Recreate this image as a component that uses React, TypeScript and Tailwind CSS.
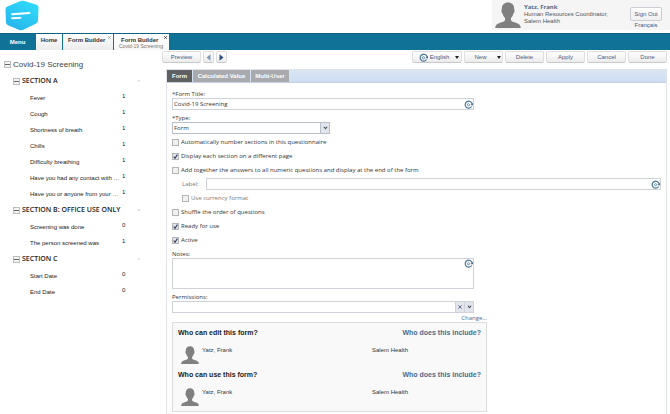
import { useState } from "react";
import type { ReactNode } from "react";

type Question = { label: string; count: number };
type Section = { title: string; questions: Question[] };

const sections: Section[] = [
  {
    title: "SECTION A",
    questions: [
      { label: "Fever", count: 1 },
      { label: "Cough", count: 1 },
      { label: "Shortness of breath", count: 1 },
      { label: "Chills", count: 1 },
      { label: "Difficulty breathing", count: 1 },
      { label: "Have you had any contact with …", count: 1 },
      { label: "Have you or anyone from your …", count: 1 },
    ],
  },
  {
    title: "SECTION B: OFFICE USE ONLY",
    questions: [
      { label: "Screening was done", count: 0 },
      { label: "The person screened was", count: 1 },
    ],
  },
  {
    title: "SECTION C",
    questions: [
      { label: "Start Date", count: 0 },
      { label: "End Date", count: 0 },
    ],
  },
];

function Logo() {
  return (
    <svg viewBox="0 0 34 31" className="h-[31px] w-[34px]" aria-label="Home">
      <defs>
        <linearGradient id="logo" x1="0.8" y1="0" x2="0.2" y2="1">
          <stop offset="0" stopColor="#2fdcfa" />
          <stop offset="1" stopColor="#27b4ec" />
        </linearGradient>
      </defs>
      <path
        d="M19.5 0.9 L31.6 4.8 Q33.6 5.6 33.5 7.6 L33 20.6 Q32.9 22.4 31.2 23.4 L18.4 29.8 Q16.4 30.7 14.4 29.9 L3 25.2 Q1 24.2 1 22.2 L0.5 9.4 Q0.5 7.3 2.4 6.5 L15.6 1.1 Q17.6 0.3 19.5 0.9 Z"
        fill="url(#logo)"
      />
      <path d="M7 14.3 L24.5 13 M7 18.3 L15.5 17.9" stroke="#fff" strokeWidth="1.9" strokeLinecap="round" />
    </svg>
  );
}

function Person({ className }: { className: string }) {
  return (
    <svg viewBox="0 0 26 26" className={className} fill="#808080" aria-hidden="true">
      <path d="M13 0.5 C16.8 0.5 19.3 3 19.2 7 C19.2 8 19.8 8.4 19.5 9.8 C19.2 11 18.5 11.3 18.2 12.2 C17.7 14 16.8 15.2 16 16 L16 18.2 C16.6 19.8 20.2 20.3 22.6 21.4 C24.8 22.4 25.6 23.6 25.8 26 L0.2 26 C0.4 23.6 1.2 22.4 3.4 21.4 C5.8 20.3 9.4 19.8 10 18.2 L10 16 C9.2 15.2 8.3 14 7.8 12.2 C7.5 11.3 6.8 11 6.5 9.8 C6.2 8.4 6.8 8 6.8 7 C6.7 3 9.2 0.5 13 0.5 Z" />
    </svg>
  );
}

function Translate() {
  return (
    <svg viewBox="0 0 16 16" className="size-[9px] shrink-0" fill="none" aria-hidden="true">
      <path d="M13.6 11.6 A6.2 6.2 0 1 1 14.4 7" stroke="#4a7595" strokeWidth="2.2" />
      <path d="M11.2 9.2 H16 V5 Z" fill="#3f6a8c" />
      <circle cx="8" cy="8.4" r="1.9" stroke="#5584a6" strokeWidth="1.5" />
    </svg>
  );
}

function Caret() {
  return (
    <svg viewBox="0 0 8 6" className="h-1 w-[5px]" aria-hidden="true">
      <path d="M0.5 1 H2.5 L4 2.4 L5.5 1 H7.5 L4 5.4 Z" fill="#444b5c" />
    </svg>
  );
}

function Triangle() {
  return (
    <svg viewBox="0 0 4 3" className="h-[3px] w-1 shrink-0" aria-hidden="true">
      <path d="M0 0 H4 L2 3 Z" fill="#222" />
    </svg>
  );
}

function Collapse() {
  return (
    <button
      aria-label="Collapse"
      className="flex size-[7px] shrink-0 items-center justify-center border border-[#bcbcbc] bg-[#f4f4f4]"
    >
      <span className="h-px w-[5px] bg-[#666]" />
    </button>
  );
}

function CloseMark({ color }: { color: string }) {
  return (
    <svg viewBox="0 0 4 4" className="absolute top-[2px] right-[2px] size-[3px]" aria-hidden="true">
      <path d="M0.4 0.4 L3.6 3.6 M3.6 0.4 L0.4 3.6" stroke={color} strokeWidth="1.2" />
    </svg>
  );
}

function ToolButton({ children, label, className = "w-[39px]" }: { children: ReactNode; label?: string; className?: string }) {
  return (
    <button
      aria-label={label}
      className={`flex h-3 shrink-0 items-center justify-center rounded-[2px] border border-[#dedede] border-b-[#c8c8c8] bg-linear-to-b from-white to-[#ececec] text-[6px] text-[#4a5a82] ${className}`}
    >
      {children}
    </button>
  );
}

function Check({ label, checked = false, muted = false }: { label: string; checked?: boolean; muted?: boolean }) {
  const [on, setOn] = useState(checked);
  return (
    <label className={`flex h-[14px] items-center gap-[2px] ${muted ? "ml-[10px] text-[#777]" : ""}`}>
      <span className="grid shrink-0">
        <input
          type="checkbox"
          checked={on}
          onChange={(e) => setOn(e.target.checked)}
          className="col-start-1 row-start-1 size-[7px] appearance-none border border-[#b4b4b4] bg-[#f1f1f1] checked:bg-[#dfe3ee]"
        />
        {on && (
          <svg viewBox="0 0 7 7" className="pointer-events-none col-start-1 row-start-1 size-[7px]" fill="none">
            <path d="M1.7 3.5 L3 5.2 L5.4 1.6" stroke="#36405e" strokeWidth="1.1" />
          </svg>
        )}
      </span>
      {label}
    </label>
  );
}

function Access({ title }: { title: string }) {
  return (
    <section className="font-['Liberation_Sans',sans-serif]">
      <div className="flex h-3 items-center justify-between text-[7px] font-bold">
        <h2 className="text-[#222]">{title}</h2>
        <a href="#" className="text-[#496a8f]">Who does this include?</a>
      </div>
      <div className="flex h-[30px] pt-[7px] pl-[3px]">
        <Person className="size-[18px]" />
        <span className="ml-[3px] w-[170px]">Yatz, Frank</span>
        <span>Salem Health</span>
      </div>
    </section>
  );
}

function Header() {
  return (
    <header className="flex h-[33px] items-start justify-between pl-[5px]">
      <Logo />
      <div className="flex h-[30px] w-[178px] bg-[#f5f5f5] pt-[2px] pl-[3px]">
        <Person className="size-[26px]" />
        <div className="ml-[3px] flex-1 pt-[2px] text-[6px] leading-[7px] whitespace-nowrap text-[#555]">
          <p className="font-['Open_Sans',sans-serif] font-bold text-[#496a8f]">Yatz, Frank</p>
          <p>Human Resources Coordinator,</p>
          <p>Salem Health</p>
        </div>
        <div className="mr-2 flex flex-col items-center pt-[5px] text-[6px] text-[#4a5a82]">
          <button className="h-4 w-8 rounded-[2px] border border-[#c9cdd4] bg-linear-to-b from-white to-[#efefef]">
            Sign Out
          </button>
          <a href="#" className="leading-[9px]">Français</a>
        </div>
      </div>
    </header>
  );
}

function Nav() {
  return (
    <nav className="flex h-[17px] gap-px border-t border-[#0b6384] bg-[#107297] text-[6px] leading-[8px] font-bold text-[#333]">
      <a href="#" className="flex w-[35px] items-center justify-center text-white">Menu</a>
      <a href="#" className="w-[26px] bg-linear-to-b from-white to-[#ececec] pt-[2px] text-center">Home</a>
      <a href="#" className="relative w-[50px] bg-linear-to-b from-white to-[#ececec] pt-[2px] pl-[5px]">
        Form Builder
        <CloseMark color="#999" />
      </a>
      <a href="#" className="relative w-[55px] bg-linear-to-b from-white to-[#f6f6f6] pt-[2px] pl-[5px]">
        <span className="block pl-[2px]">Form Builder</span>
        <span className="block text-[5px] leading-[5px] font-normal whitespace-nowrap text-[#777]">Covid-19 Screening</span>
        <CloseMark color="#222" />
      </a>
    </nav>
  );
}

function Tree() {
  return (
    <aside className="w-[162px] shrink-0 pt-[6px] pl-1 text-[6px] text-[#222]">
      <div className="flex h-[17px] items-center gap-[2px] text-[8px] text-[#444]">
        <Collapse />
        Covid-19 Screening
      </div>
      {sections.map((section) => (
        <div key={section.title}>
          <div className="flex h-[17px] items-center gap-[2px] pl-[9px] font-['Open_Sans',sans-serif] text-[7px] font-semibold">
            <Collapse />
            {section.title}
            <span className="mr-[22px] ml-auto font-normal text-[#999]">◦</span>
          </div>
          <ul>
            {section.questions.map((q) => (
              <li key={q.label} className="flex h-4 items-center pl-[26px]">
                <span className="w-[92px] whitespace-nowrap">{q.label}</span>
                <span className="pb-[3px]">{q.count}</span>
              </li>
            ))}
          </ul>
        </div>
      ))}
    </aside>
  );
}

function Toolbar() {
  return (
    <div className="flex h-[19px] items-start gap-[2px] pt-px pr-[3px]">
      <ToolButton>Preview</ToolButton>
      <ToolButton className="w-[11px]" label="Previous">
        <svg viewBox="0 0 5 7" className="h-[7px] w-[5px]"><path d="M4.5 0.3 V6.7 L0.5 3.5 Z" fill="#7f97b8" /></svg>
      </ToolButton>
      <ToolButton className="w-[11px]" label="Next">
        <svg viewBox="0 0 5 7" className="h-[7px] w-[5px]"><path d="M0.5 0.3 V6.7 L4.5 3.5 Z" fill="#2d4f82" /></svg>
      </ToolButton>
      <ToolButton className="ml-auto w-[50px] gap-[2px] pl-1">
        <Translate />
        English
        <span className="ml-1"><Triangle /></span>
      </ToolButton>
      <ToolButton className="w-[39px] gap-[10px] pl-2">
        New
        <Triangle />
      </ToolButton>
      <ToolButton>Delete</ToolButton>
      <ToolButton>Apply</ToolButton>
      <ToolButton>Cancel</ToolButton>
      <ToolButton>Done</ToolButton>
    </div>
  );
}

function FormPanel() {
  return (
    <div className="mr-[3px] ml-1 flex-1 border border-b-0 border-[#dfe2e8]">
      <div role="tablist" className="flex h-[13px] gap-px border-b border-[#c5d0e2] bg-linear-to-b from-[#dbe6f5] to-[#cdddf1] text-[6px] font-bold text-white">
        <button role="tab" aria-selected="true" className="w-[25px] bg-[#5f6062]">Form</button>
        <button role="tab" className="w-[57px] bg-[#a9aaad]">Calculated Value</button>
        <button role="tab" className="w-[38px] bg-[#a9aaad]">Multi-User</button>
      </div>
      <form className="pr-[5px] pb-[3px] pl-[5px] font-['Open_Sans',sans-serif] leading-[8px]">
        <label htmlFor="title" className="mt-[7px] block">*Form Title:</label>
        <div className="flex h-3 w-[302px] items-center border border-[#cfd3d9]">
          <input id="title" defaultValue="Covid-19 Screening" className="min-w-0 flex-1 pl-px outline-none" />
          <Translate />
        </div>
        <label htmlFor="type" className="mt-1 block">*Type:</label>
        <div className="mb-px grid h-3 w-[158px] border border-[#b9bec8]">
          <select id="type" className="col-start-1 row-start-1 h-[10px] appearance-none pl-px outline-none">
            <option>Form</option>
          </select>
          <span className="pointer-events-none col-start-1 row-start-1 flex w-[9px] items-center justify-center justify-self-end border-l border-[#b9bec8] bg-[#e2e5ec]">
            <Caret />
          </span>
        </div>
        <Check label="Automatically number sections in this questionnaire" />
        <Check label="Display each section on a different page" checked />
        <Check label="Add together the answers to all numeric questions and display at the end of the form" />
        <div className="flex h-[14px] items-center pl-[10px] text-[#777]">
          <label htmlFor="label" className="w-6">Label:</label>
          <div className="flex h-3 flex-1 items-center border border-[#cfd3d9]">
            <input id="label" className="min-w-0 flex-1 outline-none" />
            <Translate />
          </div>
        </div>
        <Check label="Use currency format" muted />
        <Check label="Shuffle the order of questions" />
        <Check label="Ready for use" checked />
        <Check label="Active" checked />
        <label htmlFor="notes" className="mt-[3px] block">Notes:</label>
        <div className="flex h-[31px] w-[302px] border border-[#cfd3d9]">
          <textarea id="notes" className="min-w-0 flex-1 resize-none outline-none" />
          <Translate />
        </div>
        <label htmlFor="permissions" className="mt-1 block">Permissions:</label>
        <div className="flex h-3 w-[302px] border border-[#cfd3d9]">
          <input id="permissions" className="min-w-0 flex-1 outline-none" />
          <button type="button" aria-label="Clear" className="flex w-[9px] items-center justify-center border-l border-[#cfd3d9] bg-[#e2e5ec]">
            <svg viewBox="0 0 6 6" className="size-1"><path d="M0.5 0.5 L5.5 5.5 M5.5 0.5 L0.5 5.5" stroke="#5b6b94" strokeWidth="1.4" /></svg>
          </button>
          <button type="button" aria-label="Open" className="flex w-[9px] items-center justify-center border-l border-[#cfd3d9] bg-[#e2e5ec]">
            <Caret />
          </button>
        </div>
        <div className="flex h-[9px] w-[315px] items-end justify-end">
          <a href="#" className="text-[#496a8f]">Change...</a>
        </div>
        <div className="w-[315px] border border-[#dcdcdc] bg-[#f9f9f9] px-[5px] pt-1">
          <Access title="Who can edit this form?" />
          <Access title="Who can use this form?" />
        </div>
      </form>
    </div>
  );
}

export default function App() {
  return (
    <div className="flex min-h-screen flex-col bg-white font-['Liberation_Sans',Arial,sans-serif] text-[6px] text-[#333]">
      <Header />
      <Nav />
      <div className="flex flex-1">
        <Tree />
        <main className="flex min-w-0 flex-1 flex-col">
          <Toolbar />
          <FormPanel />
        </main>
      </div>
    </div>
  );
}
